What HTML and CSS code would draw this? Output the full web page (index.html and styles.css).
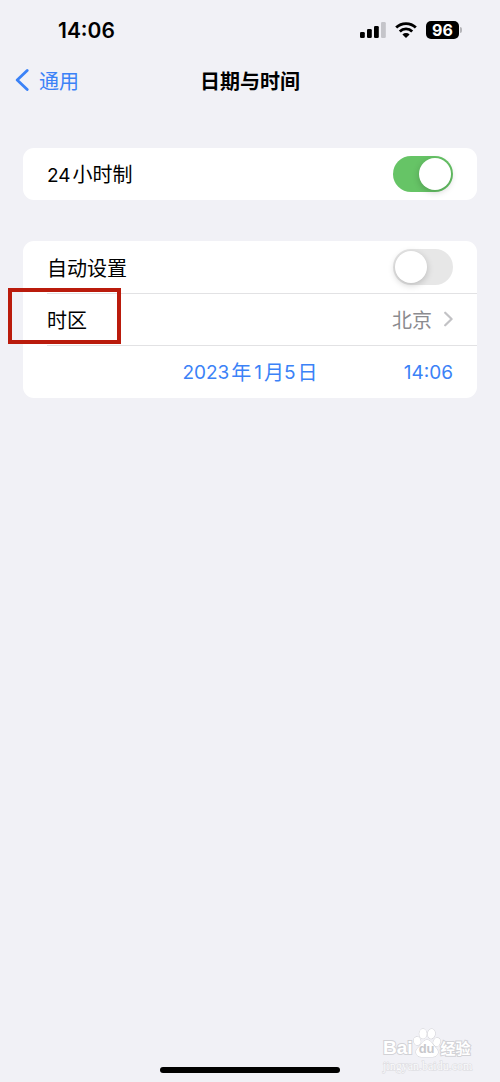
FILE: index.html
```html
<!DOCTYPE html>
<html lang="zh-CN">
<head>
<meta charset="utf-8">
<meta name="viewport" content="width=device-width, initial-scale=1">
<title>日期与时间</title>
<link rel="stylesheet" href="styles.css">
</head>
<body>
<div class="screen">
  <header class="status">
    <time class="status-time">14:06</time>
    <div class="status-icons">
      <svg class="signal" viewBox="0 0 26 16" aria-hidden="true">
        <rect x="0" y="10" width="4.8" height="6" rx="1.3"/>
        <rect x="7" y="7" width="4.8" height="9" rx="1.3"/>
        <rect x="14" y="4" width="4.8" height="12" rx="1.3"/>
        <rect class="faint" x="21" y="0" width="4.8" height="16" rx="1.3"/>
      </svg>
      <svg class="wifi" viewBox="0 0 22 16" aria-hidden="true">
        <path class="arc" d="M1.2 5.6a13.9 13.9 0 0 1 19.6 0"/>
        <path class="arc" d="M4.8 9.5a8.8 8.8 0 0 1 12.4 0"/>
        <path d="M11 16l-3.6-3.6a5.3 5.3 0 0 1 7.2 0z"/>
      </svg>
      <div class="battery"><span class="level">96</span><span class="cap"></span></div>
    </div>
  </header>

  <nav class="nav">
    <a class="back" href="#general">
      <svg class="back-icon" viewBox="0 0 14 22" aria-hidden="true"><path d="M12.2 1.5L2.2 11l10 9.5"/></svg>
      <span class="text">通用</span>
    </a>
    <h1 class="title text">日期与时间</h1>
  </nav>

  <main class="content">
    <section class="card">
      <div class="row">
        <label class="text" for="h24"><span class="num">24</span>小时制</label>
        <input class="switch" type="checkbox" role="switch" id="h24" checked>
      </div>
    </section>
    <section class="card">
      <div class="row">
        <label class="text" for="auto">自动设置</label>
        <input class="switch" type="checkbox" role="switch" id="auto">
      </div>
      <a class="row zone" href="#timezone">
        <span class="text">时区</span>
        <span class="value"><span class="text">北京</span>
          <svg class="chevron" viewBox="0 0 9 16" aria-hidden="true"><path d="M1.2 1.7L7.6 8l-6.4 6.3"/></svg>
        </span>
        <span class="marker"></span>
      </a>
      <div class="row picker">
        <button class="pick date text" type="button"><span class="num">2023</span><span>年</span><span class="num month">1</span><span>月</span><span class="num">5</span><span>日</span></button>
        <button class="pick clock text" type="button"><span>14:06</span></button>
      </div>
    </section>
  </main>

  <footer class="footer">
    <div class="watermark">
      <div class="brand">
        <span>Bai</span>
        <span class="paw">
          <svg viewBox="0 0 28 30" aria-hidden="true">
            <ellipse cx="4.2" cy="13" rx="3.4" ry="4.2" transform="rotate(-15 4.2 13)"/>
            <ellipse cx="10" cy="5.8" rx="3.7" ry="4.9"/>
            <ellipse cx="18.4" cy="5.8" rx="3.7" ry="4.9" transform="rotate(8 18.4 5.8)"/>
            <ellipse cx="23.8" cy="14" rx="3.4" ry="4.2" transform="rotate(20 23.8 14)"/>
            <path d="M14 12c3 0 4.5 2.5 6.3 4.9 2 2.5 5 4.4 4.7 7.7-.3 3-2.8 4.3-5.5 4.3h-11C5.5 28.9 3.3 27.5 3 24.6c-.3-3.3 2.7-5.2 4.7-7.7C9.5 14.5 11 12 14 12z"/>
          </svg>
          <span class="du">du</span>
        </span>
        <span class="exp">经验</span>
      </div>
      <div class="site">jingyan.baidu.com</div>
    </div>
    <div class="home"></div>
  </footer>
</div>
</body>
</html>
```
FILE: styles.css
```css
* { box-sizing: border-box; }

body {
  margin: 0;
  background: #f1f1f6;
  color: #000;
  font: 20px/28px Inter, "Noto Sans CJK SC", sans-serif;
}

.screen {
  display: flex;
  flex-direction: column;
  min-height: 100vh;
}
.text { padding: 3px 0 0; }

.status {
  display: flex;
  align-items: center;
  justify-content: space-between;
  height: 60px;
  padding: 0 38px 0 58px;
}
.status-time { padding-top: 2px; font-size: 21px; font-weight: 600; }
.status-icons { display: flex; align-items: center; gap: 9px; }
.signal { width: 26px; height: 16px; }
.signal .faint { fill: #c5c5ca; }
.wifi { width: 22px; height: 16px; }
.wifi .arc { fill: none; stroke: #000; stroke-width: 2.8; }
.battery { display: flex; align-items: center; gap: 1px; }
.level {
  width: 33px;
  height: 18px;
  border-radius: 5px;
  background: #000;
  color: #fff;
  font-size: 16px;
  font-weight: 700;
  line-height: 18px;
  text-align: center;
}
.cap { width: 2px; height: 6px; border-radius: 0 2px 2px 0; background: #b4b4b8; }

.nav {
  display: grid;
  grid-template-columns: 1fr auto 1fr;
  align-items: center;
  height: 40px;
  padding: 0 15px;
}
.back {
  display: flex;
  align-items: center;
  gap: 10px;
  color: #3b82f7;
  text-decoration: none;
}
.back-icon { width: 14px; height: 22px; }
.back-icon path, .chevron path {
  fill: none;
  stroke: currentColor;
  stroke-width: 2.8;
  stroke-linecap: round;
  stroke-linejoin: round;
}
.title { margin: 0; font-size: 20px; font-weight: 700; }

.content {
  display: flex;
  flex-direction: column;
  gap: 41px;
  padding: 48px 23px 0;
}
.card { border-radius: 11px; background: #fff; }
.row {
  position: relative;
  display: flex;
  align-items: center;
  justify-content: space-between;
  height: 52px;
  padding: 0 24px;
  color: inherit;
  text-decoration: none;
}
.row + .row {
  background: linear-gradient(#e2e2e4, #e2e2e4) 24px 0 / 100% 1px no-repeat;
}
.num { margin-right: 2px; font-size: 19px; }

.switch {
  appearance: none;
  width: 60px;
  height: 36px;
  margin: 0;
  padding: 2px;
  border-radius: 18px;
  background: #e7e7e7;
}
.switch::before {
  content: "";
  display: block;
  width: 32px;
  height: 32px;
  border-radius: 50%;
  background: #fff;
  box-shadow: 0 2px 7px #0003;
}
.switch:checked { background: #66c466; }
.switch:checked::before { margin-left: auto; }

.value { display: flex; align-items: center; gap: 12px; color: #8b8b8f; }
.chevron { width: 9px; height: 16px; color: #c2c2c5; }
.chevron path { stroke-width: 2.2; }
.marker {
  position: absolute;
  top: -5px;
  left: -15px;
  width: 113px;
  height: 56px;
  border: 4px solid #ba1b0c;
}

.row.picker { display: grid; grid-template-columns: 1fr auto 1fr; height: 53px; }
.pick {
  border: 0;
  background: none;
  color: #3b82f7;
  font: inherit;
}
.date { grid-column: 2; display: flex; }
.month { margin-left: 3px; }
.clock { display: flex; justify-self: end; font-size: 19px; }

.footer { margin-top: auto; padding-bottom: 9px; }
.watermark {
  width: 92px;
  height: 39px;
  margin: 0 25px 0 auto;
  color: #fff;
  -webkit-text-stroke: 2px #d2d2d6;
  paint-order: stroke fill;
}
.brand {
  display: flex;
  align-items: flex-end;
  font: 700 19px/20px "Liberation Sans", sans-serif;
}
.paw { position: relative; width: 28px; height: 30px; }
.paw svg { display: block; width: 28px; height: 30px; fill: #fff; stroke: #d2d2d6; }
.du {
  position: absolute;
  bottom: 2px;
  width: 28px;
  color: #c8c8cc;
  font-size: 13px;
  line-height: 14px;
  text-align: center;
  -webkit-text-stroke: 0;
}
.exp { font: 700 15px/20px "Noto Sans CJK SC", sans-serif; }
.site {
  margin-top: 1px;
  font: 12px/14px "Liberation Serif", serif;
  color: #fafafc;
  -webkit-text-stroke: 1px #dadade;
}
.home {
  width: 36%;
  height: 6px;
  margin: 0 auto;
  border-radius: 3px;
  background: #000;
}
```
